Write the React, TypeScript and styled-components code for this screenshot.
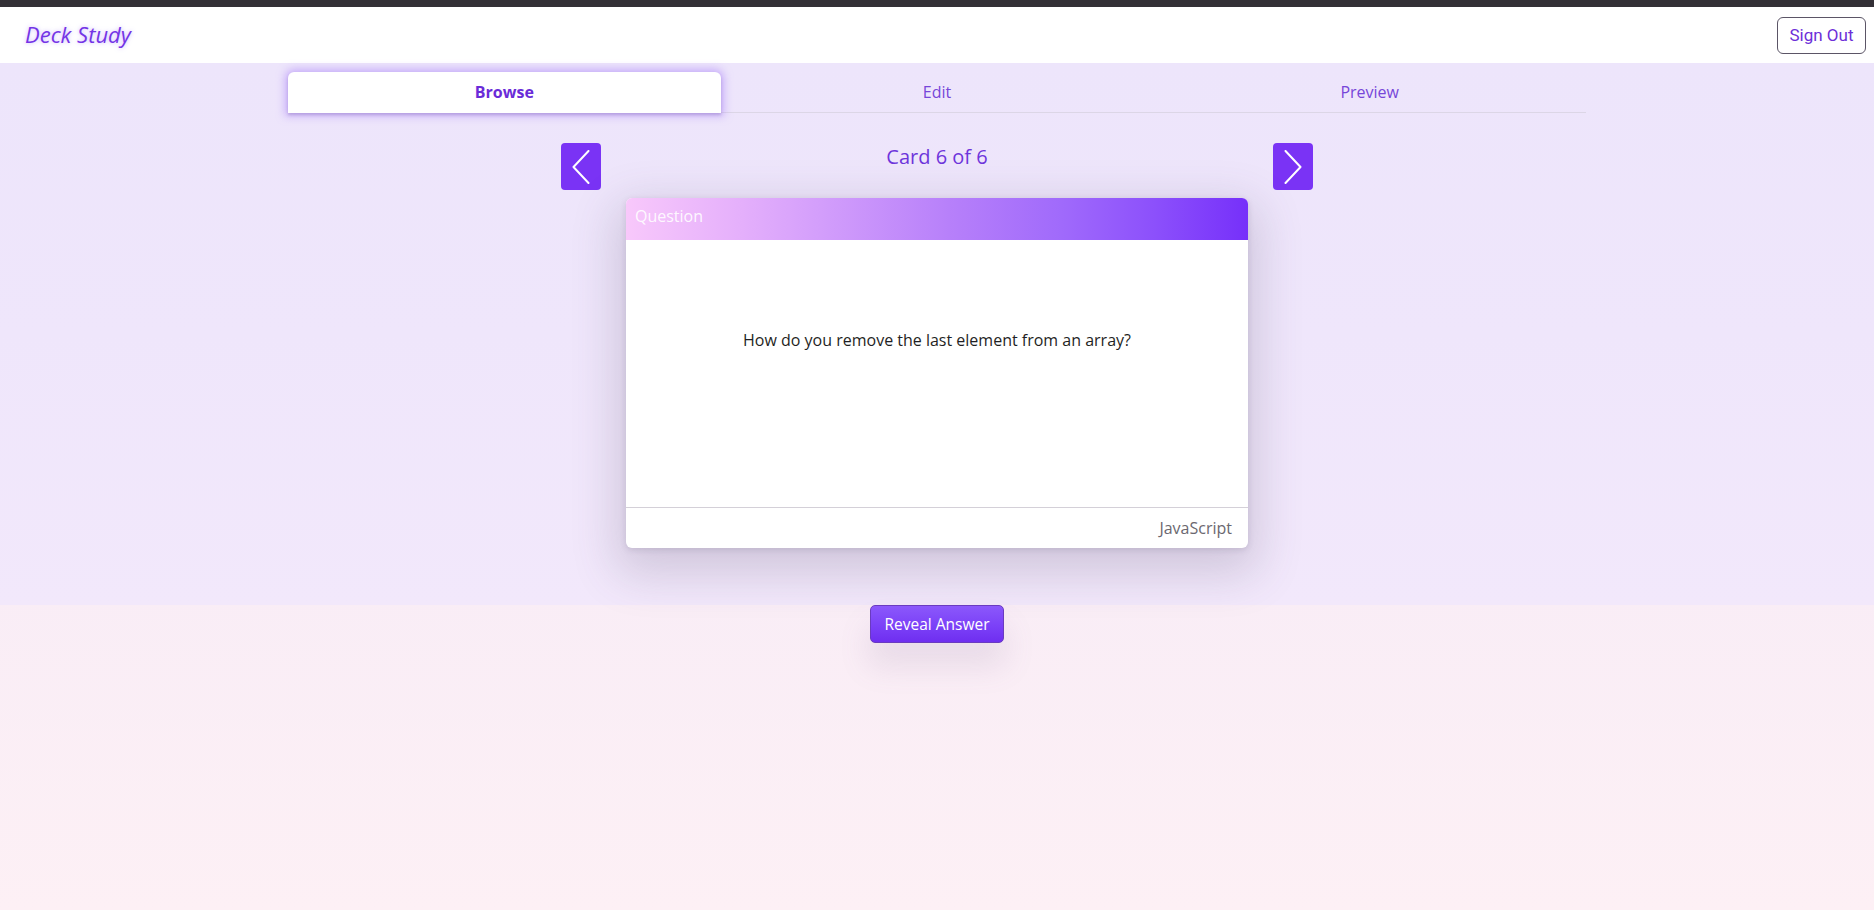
import React from "react";
import styled, { createGlobalStyle } from "styled-components";

const GlobalStyle = createGlobalStyle`
  html, body { margin: 0; padding: 0; }
  body {
    font-family: "Open Sans", "Noto Sans", Arial, sans-serif;
    background: linear-gradient(180deg, #f5e9f8 0%, #f9edf6 65%, #fdf0f5 100%);
    min-height: 100vh;
  }
  * { box-sizing: border-box; }
`;

const Page = styled.div`
  min-height: 100vh;
  display: flex;
  flex-direction: column;
`;

const ChromeBar = styled.div`
  height: 7px;
  background: #333036;
`;

const Header = styled.header`
  height: 56px;
  background: #ffffff;
  display: flex;
  align-items: center;
  justify-content: space-between;
  padding: 0 8px 0 25px;
`;

const Brand = styled.div`
  font-family: "Open Sans", sans-serif;
  font-style: italic;
  font-size: 22px;
  color: #7434e6;
  text-shadow: 0 0 4px rgba(180, 150, 250, 0.7);
  margin-top: -2px;
`;

const SignOut = styled.button`
  font-family: Roboto, "Liberation Sans", sans-serif;
  font-size: 17px;
  color: #6d2fd8;
  background: #ffffff;
  border: 1px solid #5b5566;
  border-radius: 6px;
  width: 89px;
  height: 37px;
  padding: 0;
`;

const Main = styled.main`
  background: linear-gradient(180deg, #ede5fb 0%, #efe6fb 50%, #f2e8fb 100%);
  padding: 9px 0 57px;
  display: flex;
  flex-direction: column;
  align-items: center;
`;

const TabList = styled.div`
  width: 1298px;
  display: grid;
  grid-template-columns: repeat(3, 1fr);
  border-bottom: 1px solid #dcd6e6;
`;

const Tab = styled.div<{ $active?: boolean }>`
  height: 41px;
  display: flex;
  align-items: center;
  justify-content: center;
  padding-bottom: 2px;
  font-size: 16px;
  font-weight: ${(p) => (p.$active ? 700 : 400)};
  color: ${(p) => (p.$active ? "#6a2bd8" : "#7646d9")};
  background: ${(p) => (p.$active ? "#ffffff" : "transparent")};
  border-radius: 6px 6px 0 0;
  margin-bottom: -1px;
  box-shadow: ${(p) =>
    p.$active
      ? "0 0 8px 3px rgba(170, 130, 250, 0.55), 0 2px 3px rgba(60, 40, 90, 0.25)"
      : "none"};
  position: relative;
`;

const NavRow = styled.div`
  width: 752px;
  margin-top: 30px;
  display: flex;
  justify-content: space-between;
  align-items: flex-start;
`;

const ArrowButton = styled.button`
  width: 40px;
  height: 47px;
  border: none;
  border-radius: 4px;
  background: #7a33f5;
  display: flex;
  align-items: center;
  justify-content: center;
  padding: 0;
`;

const Counter = styled.div`
  font-size: 20px;
  color: #6e35dc;
  line-height: 28px;
`;

const Card = styled.section`
  width: 622px;
  margin-top: 8px;
  background: #ffffff;
  border-radius: 6px;
  box-shadow: 0 16px 46px 10px rgba(80, 70, 100, 0.2), 0 2px 6px rgba(60, 50, 80, 0.14);
  display: flex;
  flex-direction: column;
`;

const CardHeader = styled.div`
  height: 42px;
  border-radius: 6px 6px 0 0;
  background: linear-gradient(
    90deg,
    #f8c8fb 0%,
    #e5b0fb 18%,
    #d29dfb 32%,
    #b780fa 52%,
    #a06afb 70%,
    #8c50fb 85%,
    #7630fa 100%
  );
  color: rgba(255, 255, 255, 0.9);
  font-size: 16px;
  padding: 6px 9px;
  line-height: 24px;
`;

const CardBody = styled.div`
  height: 267px;
  display: flex;
  justify-content: center;
  padding-top: 89px;
  font-size: 16px;
  color: #1f1f24;
`;

const CardFooter = styled.div`
  height: 41px;
  border-top: 1px solid #d4d0d8;
  display: flex;
  align-items: center;
  justify-content: flex-end;
  padding: 0 16px 0 0;
  font-size: 16px;
  color: #6b6870;
`;

const RevealRow = styled.div`
  display: flex;
  justify-content: center;
`;

const RevealButton = styled.button`
  font-family: "Open Sans", sans-serif;
  font-size: 15.5px;
  font-weight: 500;
  color: #ffffff;
  width: 134px;
  height: 38px;
  border: 1px solid #6a3bc0;
  border-radius: 5px;
  background: linear-gradient(180deg, #8b58fb 0%, #7a3ff7 60%, #6f2ef0 100%);
  box-shadow: 0 22px 30px 2px rgba(120, 100, 150, 0.13);
  padding: 0;
`;

const Chevron = ({ dir }: { dir: "left" | "right" }) => (
  <svg width="18" height="34" viewBox="0 0 18 34" fill="none">
    <polyline
      points={dir === "left" ? "16.5,1 1.5,17 16.5,33" : "1.5,1 16.5,17 1.5,33"}
      stroke="#ffffff"
      strokeWidth="2"
      strokeLinecap="round"
      strokeLinejoin="round"
    />
  </svg>
);

export default function App() {
  return (
    <>
      <GlobalStyle />
      <Page>
        <ChromeBar />
        <Header>
          <Brand>Deck Study</Brand>
          <SignOut>Sign Out</SignOut>
        </Header>
        <Main>
          <TabList>
            <Tab $active>Browse</Tab>
            <Tab>Edit</Tab>
            <Tab>Preview</Tab>
          </TabList>
          <NavRow>
            <ArrowButton aria-label="Previous card">
              <Chevron dir="left" />
            </ArrowButton>
            <Counter>Card 6 of 6</Counter>
            <ArrowButton aria-label="Next card">
              <Chevron dir="right" />
            </ArrowButton>
          </NavRow>
          <Card>
            <CardHeader>Question</CardHeader>
            <CardBody>How do you remove the last element from an array?</CardBody>
            <CardFooter>JavaScript</CardFooter>
          </Card>
        </Main>
        <RevealRow>
          <RevealButton>Reveal Answer</RevealButton>
        </RevealRow>
      </Page>
    </>
  );
}
